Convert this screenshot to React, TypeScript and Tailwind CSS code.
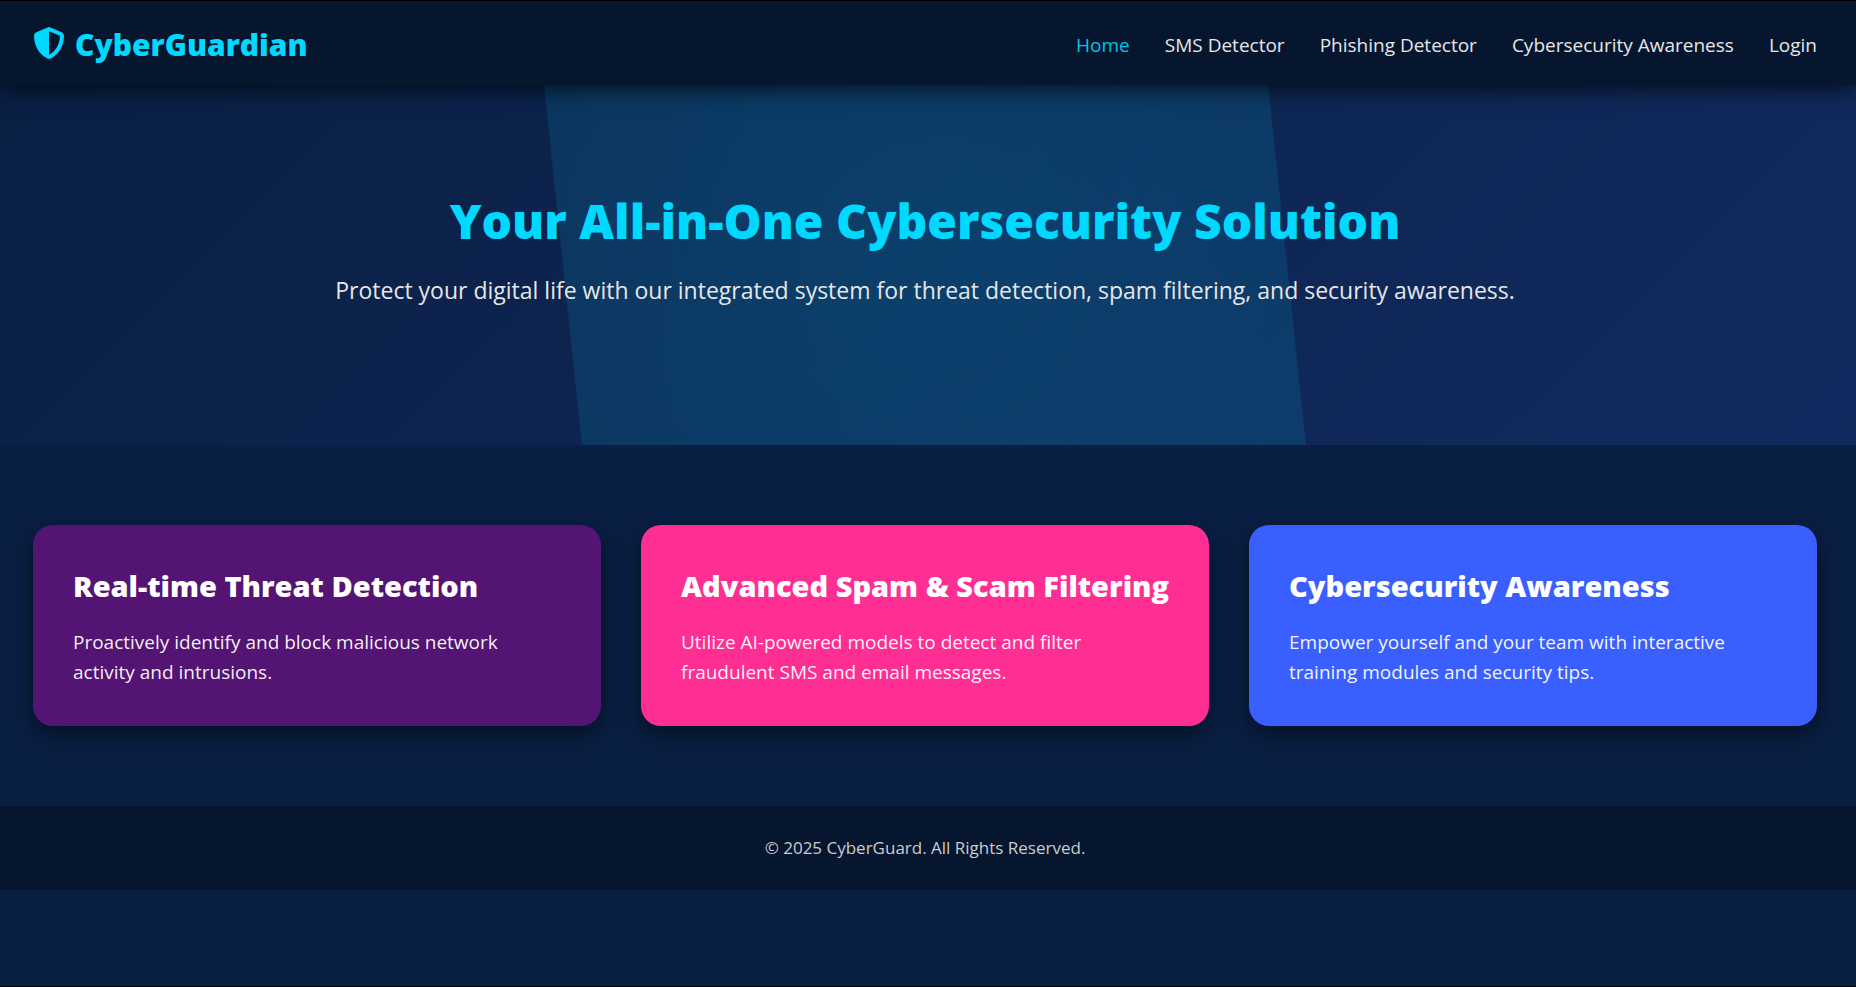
import { FaShieldHalved } from "react-icons/fa6";

const links = [
  { label: "Home", active: true },
  { label: "SMS Detector", active: false },
  { label: "Phishing Detector", active: false },
  { label: "Cybersecurity Awareness", active: false },
  { label: "Login", active: false },
];

const features = [
  {
    title: "Real-time Threat Detection",
    text: "Proactively identify and block malicious network activity and intrusions.",
    color: "bg-[#541473]",
  },
  {
    title: "Advanced Spam & Scam Filtering",
    text: "Utilize AI-powered models to detect and filter fraudulent SMS and email messages.",
    color: "bg-[#ff2e93]",
  },
  {
    title: "Cybersecurity Awareness",
    text: "Empower yourself and your team with interactive training modules and security tips.",
    color: "bg-[#3a5fff]",
  },
];

function Header() {
  return (
    <header className="relative z-10 flex h-[84px] items-center justify-between bg-[#06162f] pt-1 pr-[39px] pl-[33px] shadow-[0_4px_20px_rgba(0,0,0,0.7)]">
      <a href="#" className="flex items-center gap-2.5 text-[#00d9ff]">
        <FaShieldHalved className="mb-1 size-8" />
        <span className="text-[30px] leading-10 font-extrabold">CyberGuardian</span>
      </a>
      <nav>
        <ul className="flex gap-[35px]">
          {links.map((link) => (
            <li key={link.label}>
              <a
                href="#"
                className={link.active ? "text-[19px] leading-7 text-[#00c3e8]" : "text-[19px] leading-7 text-[#e6e6e6]"}
              >
                {link.label}
              </a>
            </li>
          ))}
        </ul>
      </nav>
    </header>
  );
}

function Hero() {
  return (
    <section className="relative h-[360px] overflow-hidden bg-linear-135 from-[#0a1f44] to-[#112b60] pt-[104px] pr-[39px] pl-[33px] text-center">
      <div className="absolute inset-y-0 left-[563px] w-[724px] skew-x-6 bg-[radial-gradient(circle_at_center,rgba(0,217,255,0.15),rgba(0,217,255,0.11))]" />
      <div className="relative">
        <h1 className="text-[48px] leading-[64px] font-extrabold text-[#00d9ff]">
          Your All-in-One Cybersecurity Solution
        </h1>
        <p className="mt-5 text-[23px] leading-[34px] text-[#e6e6e6]">
          Protect your digital life with our integrated system for threat detection, spam filtering, and security
          awareness.
        </p>
      </div>
    </section>
  );
}

export default function App() {
  return (
    <div className="min-h-screen border-y border-black bg-[#0a1f44] font-['Open_Sans','Noto_Sans',sans-serif]">
      <Header />
      <main>
        <Hero />
        <section className="grid grid-cols-3 gap-10 py-20 pr-[39px] pl-[33px]">
          {features.map((feature) => (
            <article
              key={feature.title}
              className={`${feature.color} rounded-[20px] px-10 pt-10 pb-[39px] text-white shadow-[0_8px_25px_rgba(0,0,0,0.5)]`}
            >
              <h2 className="text-[29px] leading-[42px] font-extrabold whitespace-nowrap">{feature.title}</h2>
              <p className="mt-5 text-[19px] leading-[30px] text-white/95">{feature.text}</p>
            </article>
          ))}
        </section>
      </main>
      <footer className="bg-[#06162f] py-7 pr-[39px] pl-[33px] text-center">
        <p className="text-[17px] leading-7 text-[#cccccc]">© 2025 CyberGuard. All Rights Reserved.</p>
      </footer>
    </div>
  );
}
